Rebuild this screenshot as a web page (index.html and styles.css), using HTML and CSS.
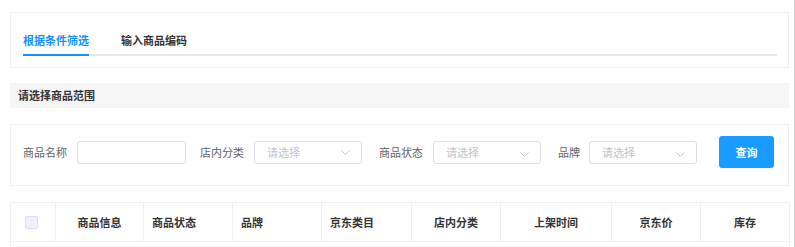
FILE: index.html
```html
<!DOCTYPE html>
<html lang="zh-CN">
<head>
  <meta charset="UTF-8">
  <title>选择商品</title>
  <link rel="stylesheet" href="styles.css">
</head>
<body>

<div class="page">

  <!-- 筛选方式 -->
  <div class="card tab-card">
    <div class="tabs">
      <div class="tab active">根据条件筛选</div>
      <div class="tab">输入商品编码</div>
    </div>
  </div>

  <div class="section-title">请选择商品范围</div>

  <!-- 筛选条件 -->
  <div class="card filter-card">
    <label class="f-label">商品名称</label>
    <input type="text" class="f-input">

    <label class="f-label">店内分类</label>
    <div class="f-select">
      <span>请选择</span>
      <svg class="arrow" width="9" height="5" viewBox="0 0 9 5"><path d="M0.5 0.5 L4.5 4.5 L8.5 0.5" fill="none" stroke="#c0c4cc" stroke-width="1"/></svg>
    </div>

    <label class="f-label">商品状态</label>
    <div class="f-select">
      <span>请选择</span>
      <svg class="arrow low" width="9" height="5" viewBox="0 0 9 5"><path d="M0.5 0.5 L4.5 4.5 L8.5 0.5" fill="none" stroke="#c0c4cc" stroke-width="1"/></svg>
    </div>

    <label class="f-label short">品牌</label>
    <div class="f-select">
      <span>请选择</span>
      <svg class="arrow low" width="9" height="5" viewBox="0 0 9 5"><path d="M0.5 0.5 L4.5 4.5 L8.5 0.5" fill="none" stroke="#c0c4cc" stroke-width="1"/></svg>
    </div>

    <button class="btn-search">查询</button>
  </div>

  <!-- 商品列表 -->
  <table class="goods-table">
    <colgroup>
      <col style="width:45px">
      <col style="width:88px">
      <col style="width:89px">
      <col style="width:89px">
      <col style="width:90px">
      <col style="width:89px">
      <col style="width:111px">
      <col style="width:89px">
      <col style="width:89px">
    </colgroup>
    <thead>
      <tr>
        <th class="col-check"><span class="checkbox"></span></th>
        <th class="c">商品信息</th>
        <th>商品状态</th>
        <th>品牌</th>
        <th>京东类目</th>
        <th class="c">店内分类</th>
        <th class="c">上架时间</th>
        <th class="c">京东价</th>
        <th class="c">库存</th>
      </tr>
    </thead>
    <tbody>
      <tr><td colspan="9"></td></tr>
    </tbody>
  </table>

</div>

</body>
</html>
```

FILE: styles.css
```css
html, body { margin: 0; padding: 0; background: #fff; }
body {
  font-family: "Noto Sans CJK SC", "Noto Sans", sans-serif;
  font-size: 11px;
  color: #333;
}
.page {
  width: 779px;
  height: 235px;
  padding: 12px 5px 0 10px;
  border-right: 1px solid #d4d4d4;
  overflow: hidden;
}
.card { border: 1px solid #eef0f5; background: #fff; }

/* tabs */
.tab-card { padding: 19px 11px 11px 12px; }
.tabs {
  display: flex;
  gap: 32px;
  border-bottom: 2px solid #e6e8ee;
}
.tab {
  line-height: 16px;
  padding-bottom: 6px;
  margin-bottom: -2px;
  border-bottom: 2px solid transparent;
  font-weight: bold;
  color: #333;
}
.tab.active { color: #1890ff; border-bottom-color: #1890ff; }

.section-title {
  margin-top: 15px;
  height: 25px;
  line-height: 25px;
  padding-left: 8px;
  background: #f5f5f5;
  font-weight: bold;
  color: #333;
}

/* filter */
.filter-card {
  margin-top: 16px;
  height: 32px;
  padding: 11px 14px 17px 12px;
  display: flex;
  align-items: center;
}
.f-label { color: #606266; margin-right: 10px; white-space: nowrap; }
.f-label.short { margin-right: 9px; }
.f-input, .f-select {
  box-sizing: border-box;
  height: 23px;
  border: 1px solid #dcdfe6;
  border-radius: 3px;
}
.f-input { width: 109px; margin-right: 14px; padding: 0 8px; outline: none; }
.f-select {
  width: 108px;
  margin-right: 17px;
  display: flex;
  align-items: center;
  justify-content: space-between;
  padding: 0 11px 0 12px;
  color: #c0c4cc;
}
.f-select .arrow { margin-top: 1px; }
.f-select .arrow.low { margin-top: 5px; }
.btn-search {
  margin-left: auto;
  width: 55px;
  height: 32px;
  border: none;
  border-radius: 3px;
  background: #1a9bff;
  color: #fff;
  font-family: inherit;
  font-size: 11px;
  font-weight: bold;
}

/* table */
.goods-table {
  margin-top: 16px;
  width: 779px;
  border-collapse: collapse;
  table-layout: fixed;
}
.goods-table th {
  height: 38px;
  border: 1px solid #eef0f5;
  text-align: left;
  padding: 0 0 0 8px;
  font-weight: bold;
  color: #333;
}
.goods-table th.c { text-align: center; padding: 0; }
.goods-table th.col-check { padding: 0 0 0 14px; }
.goods-table td { height: 20px; border: 1px solid #eef0f5; }
.checkbox {
  display: block;
  width: 11px;
  height: 11px;
  border: 1px solid #dcdfe6;
  border-radius: 2px;
  background: #edf1fa;
}
```
